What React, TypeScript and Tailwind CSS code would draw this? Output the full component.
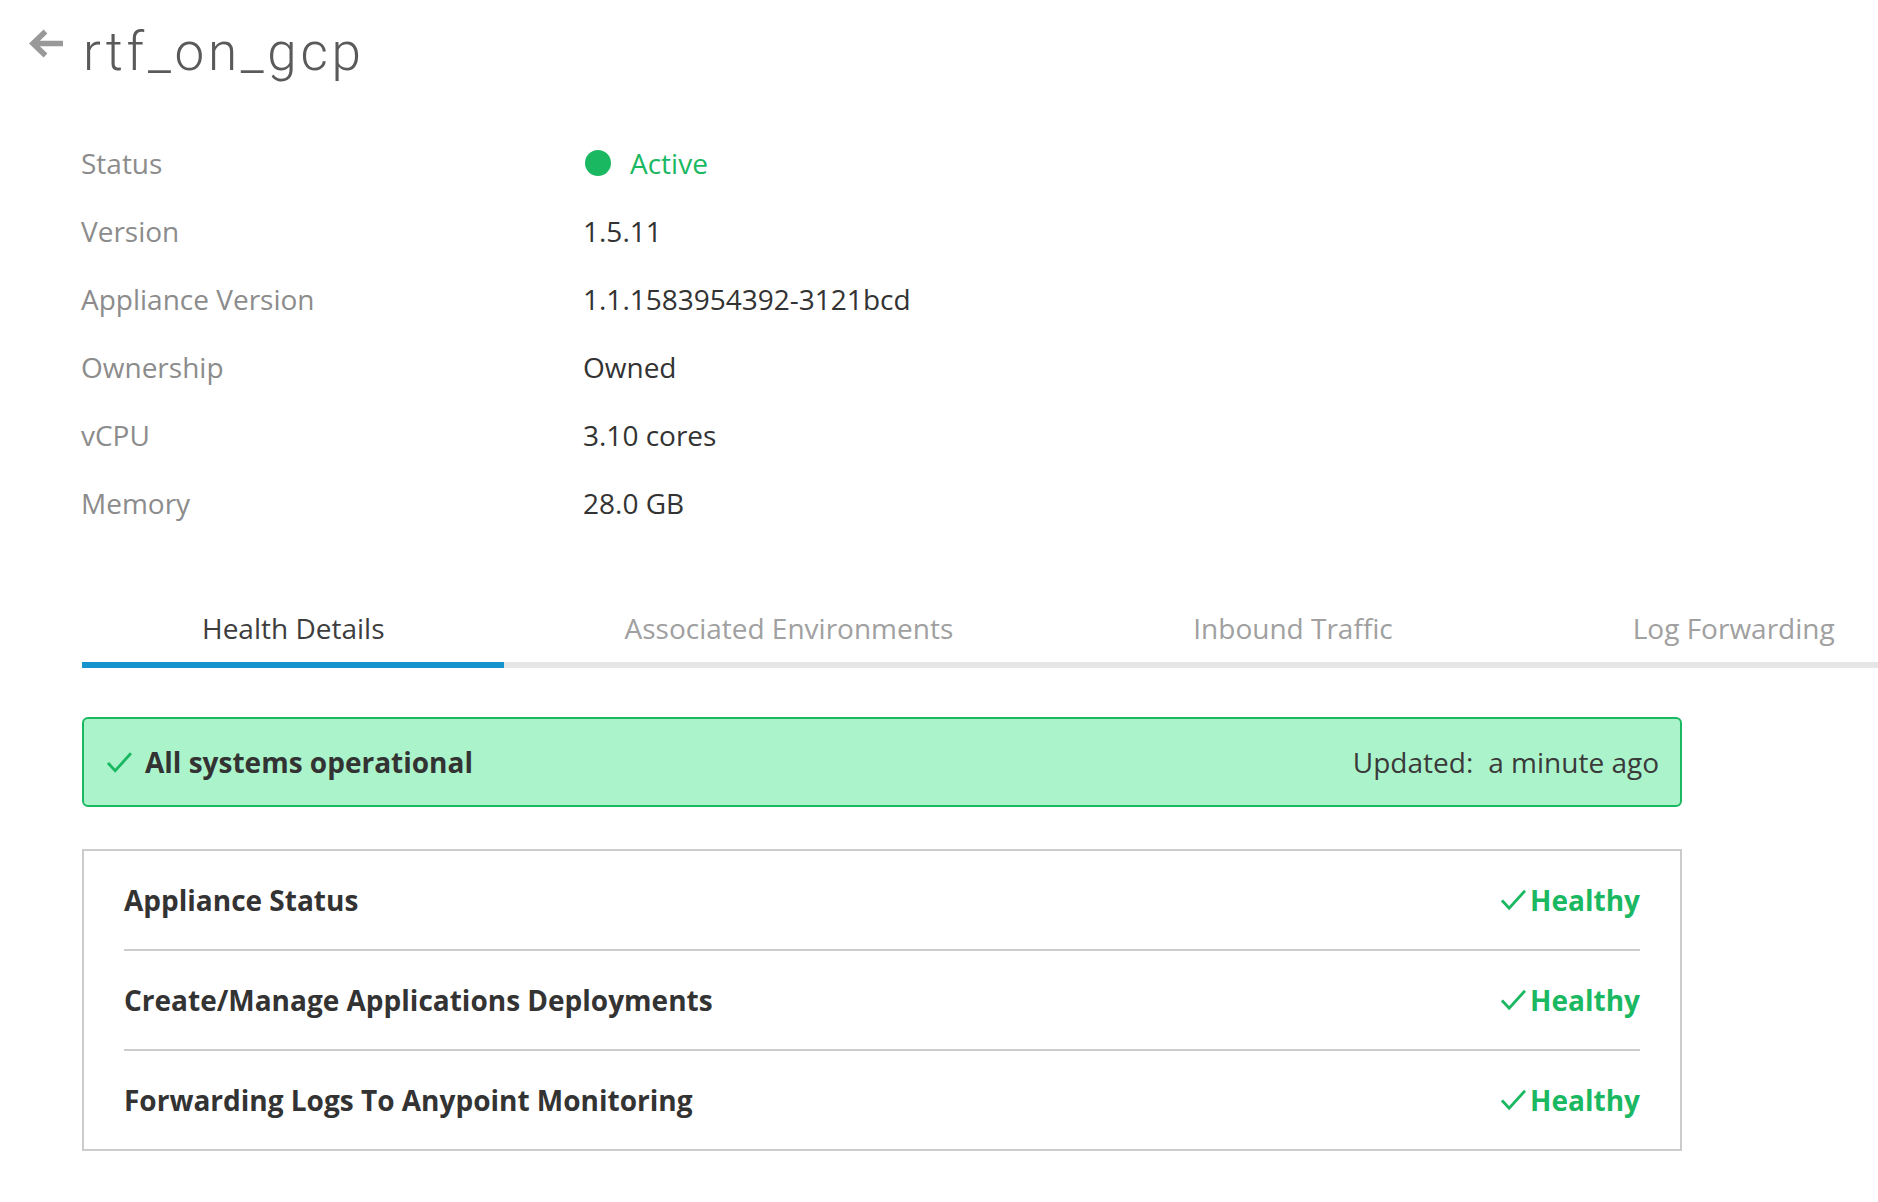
import React from "react";

const rows: { label: string; value: string; active?: boolean }[] = [
  { label: "Status", value: "Active", active: true },
  { label: "Version", value: "1.5.11" },
  { label: "Appliance Version", value: "1.1.1583954392-3121bcd" },
  { label: "Ownership", value: "Owned" },
  { label: "vCPU", value: "3.10 cores" },
  { label: "Memory", value: "28.0 GB" },
];

const tabs = ["Health Details", "Associated Environments", "Inbound Traffic", "Log Forwarding"];

const checks = [
  "Appliance Status",
  "Create/Manage Applications Deployments",
  "Forwarding Logs To Anypoint Monitoring",
];

function Check({ className }: { className?: string }) {
  return (
    <svg viewBox="0 0 26 22" className={className} fill="none">
      <path d="M2 12.5 L8.5 19.5 L24 2.5" stroke="currentColor" strokeWidth="3" strokeLinecap="square" />
    </svg>
  );
}

export default function App() {
  return (
    <div className="w-[1878px] min-h-[1202px] bg-white overflow-hidden font-['Open_Sans',sans-serif]">
      {/* Header */}
      <div className="flex items-start pt-[26px] pl-[28px]">
        <svg viewBox="0 0 37 31" className="w-[37px] h-[31px] mt-[2px] text-[#999999]" fill="none">
          <path d="M35 15.5 H6 M17.5 3.5 L5 15.5 L17.5 27.5" stroke="currentColor" strokeWidth="5.5" />
        </svg>
        <h1 className="ml-[18px] font-['Roboto',sans-serif] font-light text-[53px] leading-[53px] text-[#5a5a5a] tracking-[3.7px]">
          rtf_on_gcp
        </h1>
      </div>

      {/* Details */}
      <div className="mt-[50px] ml-[81px] flex flex-col">
        {rows.map((r) => (
          <div key={r.label} className="flex items-center h-[68px] text-[28px]">
            <div className="w-[502px] text-[#8c8c8c]">{r.label}</div>
            {r.active ? (
              <div className="flex items-center text-[#1bb862]">
                <span className="w-[26px] h-[26px] rounded-full bg-[#1bb862] mr-[19px] ml-[2px]" />
                <span>{r.value}</span>
              </div>
            ) : (
              <div className="text-[#333333]">{r.value}</div>
            )}
          </div>
        ))}
      </div>

      {/* Tabs */}
      <div className="mt-[72px] ml-[82px] flex border-b-[6px] border-[#e6e6e6] whitespace-nowrap">
        {tabs.map((t, i) => (
          <div
            key={t}
            className={
              i === 0
                ? "px-[120px] pb-[14px] text-[28px] leading-[39px] text-[#3d3d3d] border-b-[6px] border-[#1594cd] -mb-[6px] shrink-0"
                : "px-[120px] pb-[14px] text-[28px] leading-[39px] text-[#a0a0a0] shrink-0"
            }
          >
            {t}
          </div>
        ))}
      </div>

      {/* Content */}
      <div className="ml-[82px] w-[1600px] mt-[49px]">
        <div className="h-[90px] rounded-[6px] border-2 border-[#1bb862] bg-[#abf4cb] flex items-center justify-between pl-[23px] pr-[21px]">
          <div className="flex items-center">
            <Check className="w-[25px] h-[21px] text-[#1bb862]" />
            <span className="ml-[13px] font-bold text-[28px] text-[#333333]">All systems operational</span>
          </div>
          <div className="text-[28px] text-[#3a3a3a]">
            Updated:<span className="ml-[15px]">a minute ago</span>
          </div>
        </div>

        <div className="mt-[42px] border-2 border-[#cccccc] px-[40px]">
          {checks.map((c, i) => (
            <div
              key={c}
              className={
                i < checks.length - 1
                  ? "h-[100px] flex items-center justify-between border-b-2 border-[#cccccc]"
                  : "h-[98px] flex items-center justify-between"
              }
            >
              <span className="font-bold text-[28px] text-[#333333]">{c}</span>
              <span className="flex items-center font-bold text-[28px] text-[#1bb862]">
                <Check className="w-[25px] h-[22px] mr-[4px]" />
                Healthy
              </span>
            </div>
          ))}
        </div>
      </div>
    </div>
  );
}
